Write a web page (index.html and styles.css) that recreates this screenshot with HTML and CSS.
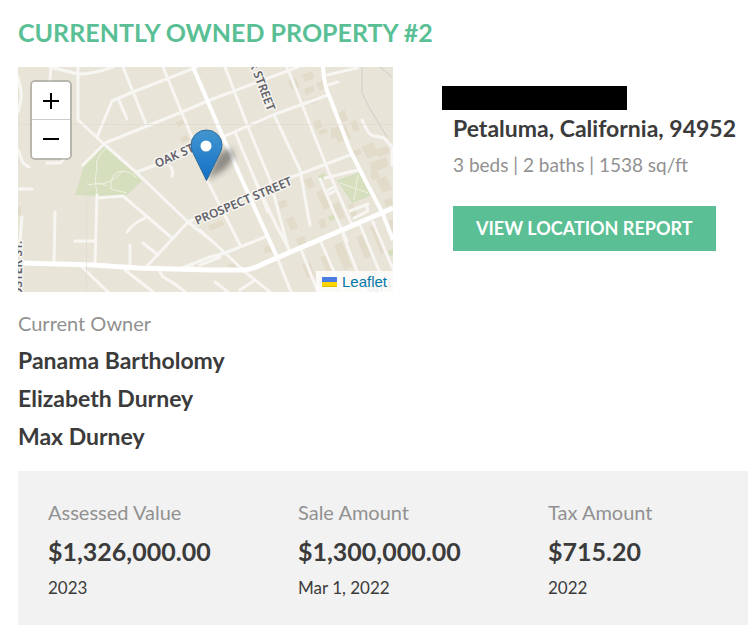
FILE: index.html
```
<!DOCTYPE html>
<html lang="en">
<head>
<meta charset="utf-8">
<meta name="viewport" content="width=device-width, initial-scale=1">
<title>Currently Owned Property</title>
<link rel="stylesheet" href="styles.css">
</head>
<body>
<main class="property">
  <h2 class="heading">CURRENTLY OWNED PROPERTY #2</h2>
  <section class="overview">
    <div class="map">
      <svg class="tiles" viewBox="0 0 375 225" preserveAspectRatio="xMidYMid slice" aria-hidden="true">
        <defs>
          <linearGradient id="pin" x1="0" y1="0" x2="0" y2="1"><stop offset="0" stop-color="#4296cf"/><stop offset="1" stop-color="#126fc6"/></linearGradient>
          <filter id="soft" x="-50%" y="-50%" width="200%" height="200%"><feGaussianBlur stdDeviation="3"/></filter>
        </defs>
        <rect width="375" height="225" fill="#e8e4d8"/>
        <g class="blocks">
          <path d="M270 14l8-3 4 9-8 3zM284 8l10-4 3 7-10 4zM286 22l9-4 2 6-9 4zM298 16l7-3 3 8-7 3zM291 32l8-3 2 5-8 3zM295 55l7-3 3 8-7 3zM302 68l8-3-2-4-8 3zM320 46l7-3 3 10-7 3zM313 62l14-5 6 14-13 5-2-5-5 1zM332 55l6-2 4 10-6 2zM343 80l12-5 5 12-10 5zM352 96l16-6 3 9-12 5 3 7-8 2zM357 83l12-4 3 7-12 4zM334 84l8-3 2 6-8 3zM158 55l7-3 2 5-7 3zM162 71l7-3 2 5-7 3z"/>
          <path d="M190 159l14-6 2 5-14 6zM286 113l7-3 4 9-7 3zM298 125l7-3 8 18-7 3zM314 138l7-3 6 15-7 3zM330 138l5-2 4 12-5 2zM260 135l8-3 2 7-8 3zM268 152l7-3 5 12-7 3zM278 172l8-3 3 8-8 3zM300 154l6-3 3 8-6 3zM358 113l10-4 6 13-9 4zM366 133l8-3v8l-6 2zM284 198l8-3 5 13-8 3zM302 190l8-3 7 16-8 3zM316 178l8-3 10 25-8 3zM338 170l8-3 9 22-8 3zM352 160l6-3 11 27-6 3zM368 155l7-3v17l-4 1zM210 198l9-4 2 6-9 3zM245 181l8-3 2 6-8 3zM0 138l3 2v8l-3 1z"/>
        </g>
        <path class="green" d="M87 78L67 96 57 128 79 129 109 128 124 114 114 104zM319 113l24-8 11 23-20 8zM300 109l6-3 3 4-7 3zM310 150l7-3 2 4-7 3zM369 185l6-3v6l-4 1z"/>
        <path class="trail" d="M88 81Q76 92 79 102Q76 110 79 126M79 117Q92 118 105 104M93 122Q91 105 105 104Q112 104 118 110M70 118l11-2 8 3M322 116l28 10M340 108l-4 25M93 122l16 4"/>
        <g class="roads">
          <path d="M32 0L60 7Q75 7 95 0M33 0L32 13M60 0V53L86 77 119 106 170 155 194 174M182 163L207 186 227 205 252 225M0 10Q4 25 3 32T0 45M0 83L5 96 11 100M29 96H42L47 91M65 98L87 76 164 45 192 33 272 3 280 0M79 70L94 34 115 25 179 0M100 31L109 52M105 0L128 57M145 0L175 73M119 105L135 99 174 81M205 70L255 48 310 28M152 99Q156 103 154 109"/>
          <path d="M207 0L230 60 252 113 270 181M217 65L237 113 259 160 272 184M257 50L282 103 292 158M269 0L285 40 310 103 334 158M309 8L339 1M310 18L320 15M130 198L170 155 274 110 332 88M307 111L340 103M79 131L105 129 154 171M79 128L77 196M127 151Q114 157 109 165M125 176L140 188M112 178V198M57 174H77M37 145L36 195M0 122H14M4 150L2 175M64 200L90 225M107 203L135 225M142 205L145 210Q157 216 167 225"/>
          <path d="M164 201L192 190 207 186 247 170M182 198L202 190M172 199l8 4M189 113L222 178M197 215L210 225M222 223L237 213M236 110L250 145M302 112L315 143 329 174M307 125L316 120M309 128L317 124M282 180L300 225M259 190L273 225M302 173L325 225M325 168L347 225M342 158L365 213M355 155L375 202M332 144L350 137M336 151L350 144 348 137"/>
        </g>
        <path class="street" d="M175 0L202 63 224 113 259 190M305 0Q306 20 312 31L332 83 347 113 364 145 375 173"/>
        <path class="roads" d="M344 53L349 63Q353 70 358 69L366 71 374 80V98"/>
        <path class="avenue" d="M4 196L76 198 120 201 192 203H225Q234 203 247 196L352 151 375 141"/>
        <path class="rail" d="M344 0V26L352 42 369 70M362 0L374 10"/>
        <path class="seam" d="M0 57.500H375M68.500 100V225"/>
        <g class="names">
          <text transform="translate(139 101) rotate(-24)">OAK ST</text>
          <text transform="translate(179 158) rotate(-23)">PROSPECT STREET</text>
          <text transform="translate(231 -4) rotate(69)">R STREET</text>
          <text transform="translate(4 230) rotate(-90)">OSTER ST.</text>
          <text class="faint" transform="translate(352 229) rotate(-22)">WHITE</text>
        </g>
        <path d="M189 113L199 90Q208 78 214 84T206 103Z" fill="#333" opacity=".5" filter="url(#soft)"/>
        <path d="M188.500 113.500L176 88Q173 83 173 78A15.500 15 0 0 1 204 78Q204 83 201 88Z" fill="url(#pin)" stroke="#2e6c97"/>
        <circle cx="188" cy="79" r="5.500" fill="#fff"/>
      </svg>
      <div class="zoom">
        <button type="button" aria-label="Zoom in"><svg viewBox="0 0 16 16"><path d="M0 8H16M8 0V16"/></svg></button>
        <button type="button" aria-label="Zoom out"><svg viewBox="0 0 16 16"><path d="M0 8H16"/></svg></button>
      </div>
      <div class="credit">
        <svg viewBox="0 0 15 10" aria-hidden="true"><path fill="#4c7be1" d="M0 0h15v5H0z"/><path fill="#ffd500" d="M0 5h15v4H0z"/><path fill="#e0bc00" d="M0 9h15v1H0z"/></svg>
        <a href="#">Leaflet</a>
      </div>
    </div>
    <div class="details">
      <div class="redacted"></div>
      <p class="strong">Petaluma, California, 94952</p>
      <p class="rooms">3 beds | 2 baths | 1538 sq/ft</p>
      <a class="report" href="#">VIEW LOCATION REPORT</a>
    </div>
  </section>
  <section class="owners">
    <p class="label">Current Owner</p>
    <ul>
      <li class="strong">Panama Bartholomy</li>
      <li class="strong">Elizabeth Durney</li>
      <li class="strong">Max Durney</li>
    </ul>
  </section>
  <section class="figures">
    <div><p class="label">Assessed Value</p><p class="amount">$1,326,000.00</p><p class="date">2023</p></div>
    <div><p class="label">Sale Amount</p><p class="amount">$1,300,000.00</p><p class="date">Mar 1, 2022</p></div>
    <div><p class="label">Tax Amount</p><p class="amount">$715.20</p><p class="date">2022</p></div>
  </section>
</main>
</body>
</html>
```
FILE: styles.css
```
* { box-sizing: border-box; }
body { margin: 0; background: #fff; color: #3b3b3b; font-family: Lato, "Liberation Sans", sans-serif; }
p, h2, ul { margin: 0; padding: 0; }
ul { list-style: none; }
.property { padding: 17px 0 0 18px; }
.heading { color: #5abf95; font-size: 25px; line-height: 30px; font-weight: 700; }
.overview { display: grid; grid-template-columns: minmax(0, 375px) minmax(295px, 1fr); column-gap: 60px; margin-top: 20px; }
.map { position: relative; aspect-ratio: 5 / 3; overflow: hidden; }
.tiles { display: block; width: 100%; height: 100%; }
.blocks { fill: #e2d9c7; opacity: .8; }
.green { fill: #d5dfbd; }
.trail { fill: none; stroke: #eef1e2; stroke-width: 1; }
.roads { fill: none; stroke: #f7f6f3; stroke-width: 3; stroke-linecap: round; stroke-linejoin: round; }
.street { fill: none; stroke: #fff; stroke-width: 4; stroke-linejoin: round; }
.avenue { fill: none; stroke: #fff; stroke-width: 5; stroke-linejoin: round; }
.rail { fill: none; stroke: #cfccc4; stroke-width: 1; }
.seam { fill: none; stroke: #dddad2; stroke-width: 1; opacity: .6; }
.names { fill: #62626a; font: 600 12px "Noto Sans", sans-serif; stroke: #f6f4ef; stroke-width: 3px; paint-order: stroke; stroke-linejoin: round; }
.names .faint { opacity: .4; }
.zoom { position: absolute; top: 13px; left: 12px; border: 2px solid rgba(0, 0, 0, .2); border-radius: 5px; background-clip: padding-box; }
.zoom button { display: grid; place-items: center; width: 38px; height: 38px; padding: 0; border: 0; background: #fff; border-radius: 0 0 3px 3px; }
.zoom button:first-child { border-bottom: 1px solid #ccc; border-radius: 3px 3px 0 0; }
.zoom svg { width: 16px; height: 16px; stroke: #000; stroke-width: 2; }
.credit { position: absolute; right: 0; bottom: 0; display: flex; align-items: center; gap: 5px; height: 21px; padding: 0 6px; background: rgba(255, 255, 255, .8); font: 15px/21px "Liberation Sans", sans-serif; }
.credit svg { width: 15px; height: 10px; }
.credit a { color: #0078a8; text-decoration: none; }
.redacted { width: 185px; height: 24px; margin: 19px 0 0 -11px; background: #000; }
.strong { font-size: 23px; line-height: 38px; font-weight: 700; }
.details .strong { line-height: 36px; white-space: nowrap; }
.label, .rooms { color: #919191; font-size: 20px; line-height: 36px; }
.rooms { font-size: 19px; line-height: 38px; }
.report { display: inline-block; margin-top: 22px; padding: 0 23px; background: #5abf95; color: #fff; font-size: 18px; line-height: 45px; font-weight: 700; text-decoration: none; white-space: nowrap; }
.owners { margin-top: 13px; }
.figures { display: grid; grid-template-columns: repeat(3, 250px); margin-top: 16px; padding: 23px 30px; background: #f2f2f2; overflow: hidden; }
.amount { font-size: 25px; line-height: 42px; font-weight: 700; }
.date { font-size: 17px; line-height: 32px; }
```
